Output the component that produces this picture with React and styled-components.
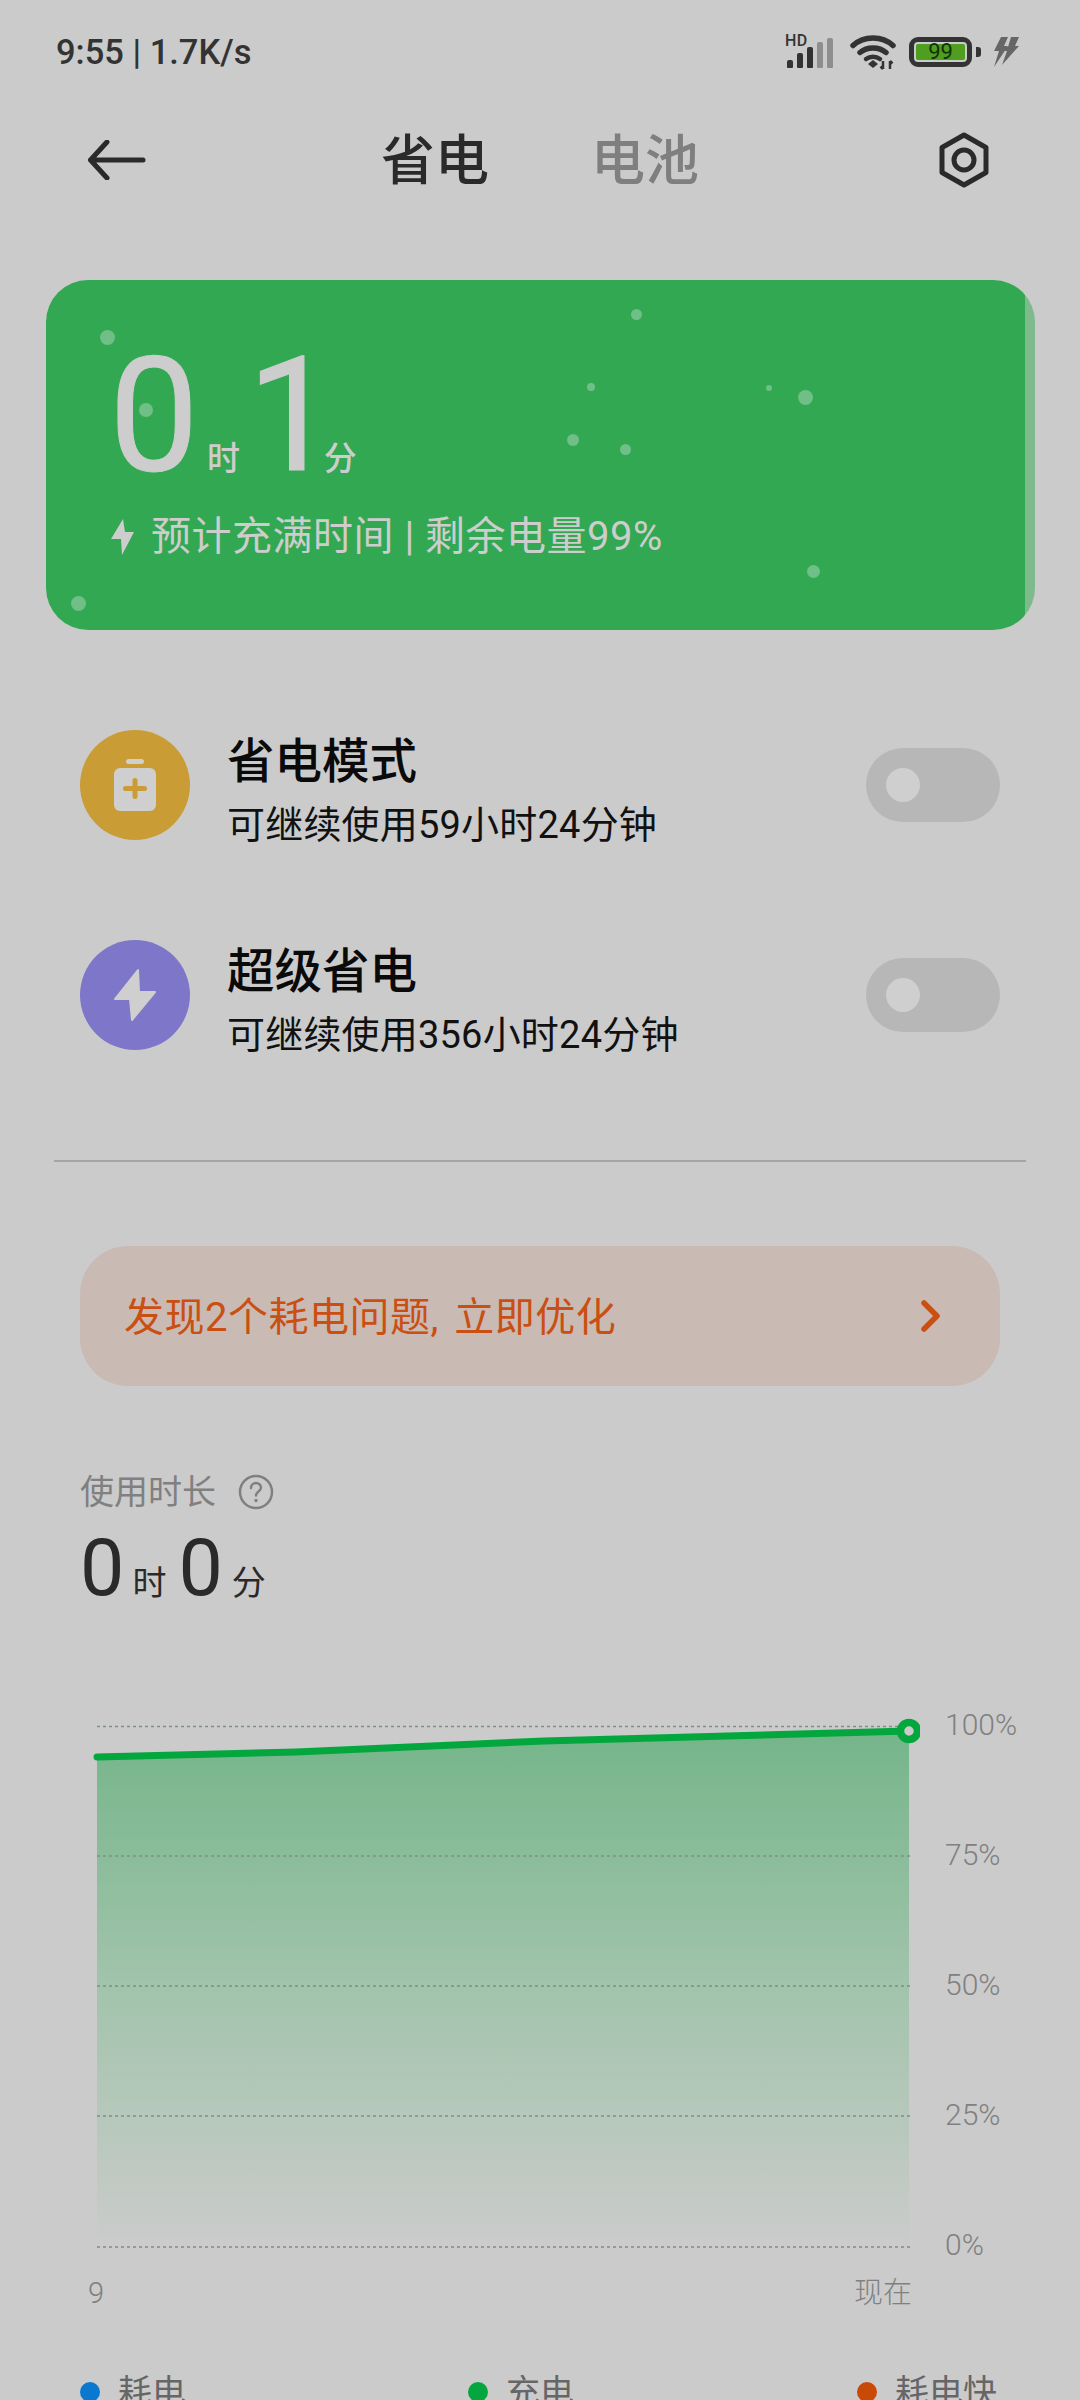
import React from 'react';
import styled, {createGlobalStyle} from 'styled-components';

const Global = createGlobalStyle`
  html, body {
    margin: 0;
    padding: 0;
    background: #cbcbcb;
    height: 2400px;
    overflow: hidden;
  }
  * { box-sizing: border-box; }
`;

const Page = styled.div`
  width: 1080px;
  height: 2400px;
  overflow: hidden;
  background: #cbcbcb;
  font-family: Roboto, "Noto Sans CJK SC", sans-serif;
  color: #2a2a2a;
`;

const StatusBar = styled.div`
  height: 104px;
  padding: 0 61px 0 56px;
  display: flex;
  align-items: center;
  justify-content: space-between;
`;
const Clock = styled.div`
  font-size: 34.500px;
  font-weight: 500;
  color: #333;
`;
const StatusIcons = styled.div`
  display: flex;
  align-items: center;
  gap: 13px;
`;
const Signal = styled.div`
  position: relative;
  width: 50px;
  height: 32px;
  display: flex;
  align-items: flex-end;
  gap: 4px;
`;
const Hd = styled.span`
  position: absolute;
  left: -2px;
  top: -2px;
  font-size: 16px;
  line-height: 14px;
  font-weight: 500;
  letter-spacing: 0.5px;
  color: #333;
`;
const SignalBar = styled.i`
  display: block;
  width: 6px;
  height: ${p => p.$h}px;
  background: ${p => (p.$off ? '#8e8e8e' : '#333')};
  border-radius: 2px 2px 1px 1px;
`;
const Battery = styled.div`
  position: relative;
  width: 63px;
  height: 30px;
  border: 5px solid #333;
  border-radius: 9px;
  padding: 2px;
  margin-right: 8px;
  &::after {
    content: '';
    position: absolute;
    right: -14px;
    top: 5px;
    width: 5px;
    height: 10px;
    background: #333;
    border-radius: 0 3px 3px 0;
  }
`;
const BatteryFill = styled.div`
  height: 100%;
  background: #4f9e1f;
  border-radius: 2px;
  display: flex;
  align-items: center;
  justify-content: center;
  font-size: 22px;
  line-height: 16px;
  color: #13300a;
`;

const Nav = styled.div`
  height: 112px;
  padding: 0 90px 0 88px;
  display: flex;
  align-items: center;
  justify-content: space-between;
`;
const Tabs = styled.div`
  display: flex;
  gap: 102px;
  padding-top: 4px;
  margin-right: 4px;
`;
const Tab = styled.div`
  font-size: 54px;
  line-height: 60px;
  font-weight: 500;
  color: ${p => (p.$active ? '#2a2a2a' : '#7f7f7f')};
`;

const Card = styled.div`
  position: relative;
  margin: 64px 0 0 46px;
  width: 989px;
  height: 350px;
  padding: 61px 0 0 63px;
  border-radius: 42px;
  overflow: hidden;
  background: linear-gradient(90deg, #33a853 0, #33a853 979px, #7fba8e 979px);
  color: #cdcdcd;
`;
const Bubble = styled.i`
  position: absolute;
  left: ${p => p.$x - 46}px;
  top: ${p => p.$y - 280}px;
  width: ${p => p.$d}px;
  height: ${p => p.$d}px;
  margin: ${p => -p.$d / 2}px 0 0 ${p => -p.$d / 2}px;
  border-radius: 50%;
  background: #6fbf86;
`;
const Duration = styled.div`
  display: flex;
  align-items: baseline;
  height: 150px;
`;
const BigNum = styled.span`
  font-size: 160px;
  line-height: 150px;
  font-weight: 400;
  -webkit-text-stroke: 1px #cdcdcd;
  letter-spacing: ${p => p.$ls || 0}px;
  margin-right: ${p => p.$mr || 0}px;
`;
const BigUnit = styled.span`
  font-size: 33px;
  font-weight: 500;
  margin-right: ${p => p.$mr || 0}px;
`;
const ChargeLine = styled.div`
  display: flex;
  align-items: center;
  gap: 17px;
  margin-top: 22px;
  font-size: 40px;
  line-height: 48px;
  letter-spacing: 0.5px;
  margin-left: 1px;
`;

const Modes = styled.div`
  margin-top: 50px;
`;
const ModeRow = styled.div`
  height: 210px;
  padding: 0 80px;
  display: flex;
  align-items: center;
`;
const ModeIcon = styled.div`
  width: 110px;
  height: 110px;
  border-radius: 50%;
  background: ${p => p.$bg};
  display: flex;
  align-items: center;
  justify-content: center;
`;
const ModeText = styled.div`
  flex: 1;
  margin-left: 37px;
  padding-top: 9px;
`;
const ModeTitle = styled.div`
  font-size: 47.500px;
  line-height: 60px;
  font-weight: 500;
  color: #0a0a0a;
`;
const ModeSub = styled.div`
  margin-top: 10px;
  font-size: 38px;
  line-height: 46px;
  letter-spacing: 0.2px;
  color: #111;
`;
const Toggle = styled.div`
  width: 134px;
  height: 74px;
  border-radius: 37px;
  background: #b7b7b7;
  padding: 20px;
`;
const Knob = styled.div`
  width: 34px;
  height: 34px;
  border-radius: 50%;
  background: #cfcfcf;
`;

const Divider = styled.div`
  margin: 60px 54px 0;
  height: 2px;
  background: #a5a5a5;
`;

const Banner = styled.div`
  margin: 84px 80px 0;
  height: 140px;
  padding: 0 58px 0 44px;
  border-radius: 48px;
  background: #c9bab3;
  display: flex;
  align-items: center;
  justify-content: space-between;
  font-size: 40px;
  color: #c94f12;
`;
const BannerText = styled.span`
  padding-bottom: 5px;
  letter-spacing: 0.5px;
  word-spacing: 5px;
`;

const Usage = styled.div`
  margin: 86px 0 0 80px;
`;
const UsageHead = styled.div`
  display: flex;
  align-items: center;
  gap: 22px;
  font-size: 34px;
  line-height: 40px;
  color: #808080;
`;
const UsageTime = styled.div`
  display: flex;
  align-items: baseline;
  margin-top: 14px;
  color: #2a2a2a;
`;
const UsageNum = styled.span`
  font-size: 79px;
  line-height: 84px;
  margin-right: ${p => p.$mr}px;
`;
const UsageUnit = styled.span`
  font-size: 34px;
  margin-right: ${p => p.$mr}px;
`;

const ChartWrap = styled.div`
  margin: 100px 0 0 90px;
  display: flex;
`;
const Plot = styled.svg`
  display: block;
  width: 830px;
  height: 550px;
`;
const YAxis = styled.div`
  margin: 0 0 0 25px;
  display: flex;
  flex-direction: column;
  gap: 100px;
  font-size: 30px;
  line-height: 30px;
  font-weight: 300;
  color: #808080;
`;
const XAxis = styled.div`
  width: 824px;
  margin: 15px 0 0 -2px;
  display: flex;
  justify-content: space-between;
  font-size: 29px;
  line-height: 36px;
  font-weight: 300;
  color: #808080;
`;
const Legend = styled.div`
  margin-top: 61px;
  padding-left: 80px;
  display: grid;
  grid-template-columns: 388px 389px auto;
`;
const LegendItem = styled.div`
  display: flex;
  align-items: center;
  gap: 18px;
  font-size: 34px;
  line-height: 40px;
  color: #666;
`;
const LegendDot = styled.i`
  width: 20px;
  height: 20px;
  border-radius: 50%;
  background: ${p => p.$c};
`;

const bubbles = [
  [107, 337, 15], [636, 314, 11], [146, 410, 14], [591, 387, 8], [769, 388, 6],
  [805, 397, 15], [573, 440, 12], [625, 449, 11], [813, 571, 13], [78, 603, 15],
];

const gridY = [16.5, 146, 276, 406, 537];

const Wifi = () => (
  <svg width="46" height="36" viewBox="0 0 46 36" fill="none">
    <path d="M3 11.500C14 1.500 32 1.500 43 11.500" stroke="#333" strokeWidth="5.500" strokeLinecap="round" />
    <path d="M10 18.500C17 12.500 29 12.500 36 18.500" stroke="#333" strokeWidth="5.500" strokeLinecap="round" />
    <path d="M16 25C20 22 26 22 30 25" stroke="#333" strokeWidth="4.500" strokeLinecap="round" />
    <path d="M18 30l5-4 5 4-5 4z" fill="#333" />
    <path d="M33 27v8M33 35l-2.500-2.500M40 35v-8M40 27l2.500 2.500" stroke="#333" strokeWidth="2.500" />
  </svg>
);

const DoubleBolt = () => (
  <svg width="26" height="30" viewBox="0 0 26 30">
    <path d="M8 0h7l-4 9h4L1 30l5-16H1z" fill="#666" />
    <path d="M18 0h8l-4 9h4L9 28l5-14h-4l3-4h2z" fill="#666" />
  </svg>
);

const BackArrow = () => (
  <svg width="58" height="40" viewBox="0 0 58 40" fill="none">
    <path d="M19 2L2.500 20 19 38M3 20h52" stroke="#2a2a2a" strokeWidth="5" strokeLinecap="round" strokeLinejoin="round" />
  </svg>
);

const HexNut = () => (
  <svg width="52" height="56" viewBox="0 0 52 56" fill="none">
    <path d="M26 3l22 12.500v25L26 53 4 40.500v-25z" stroke="#2a2a2a" strokeWidth="5" strokeLinejoin="round" />
    <circle cx="26" cy="28" r="10" stroke="#2a2a2a" strokeWidth="5" />
  </svg>
);

const SmallBolt = () => (
  <svg width="24" height="38" viewBox="0 0 24 38">
    <path d="M13 1L1 21h10l1 16L24 14h-9z" fill="#cdcdcd" />
  </svg>
);

const BatteryPlus = () => (
  <svg width="42" height="52" viewBox="0 0 42 52">
    <rect x="12" y="0" width="18" height="5" rx="2.500" fill="#cfcfcf" />
    <rect x="0" y="9" width="42" height="43" rx="6" fill="#cfcfcf" />
    <path d="M21 21.500v16M11.500 29.500h19" stroke="#c99c35" strokeWidth="5" strokeLinecap="round" />
  </svg>
);

const Bolt = () => (
  <svg width="44" height="54" viewBox="0 0 44 54">
    <path d="M25 2L2 31h15l2 21 23-28H26z" fill="#cfcfcf" stroke="#cfcfcf" strokeWidth="2" strokeLinejoin="round" />
  </svg>
);

const Chevron = () => (
  <svg width="22" height="32" viewBox="0 0 22 32" fill="none">
    <path d="M4 3l13 13L4 29" stroke="#c94f12" strokeWidth="5.500" strokeLinecap="round" strokeLinejoin="round" />
  </svg>
);

const Help = () => (
  <svg width="36" height="36" viewBox="0 0 36 36" fill="none">
    <circle cx="18" cy="18" r="16" stroke="#808080" strokeWidth="2.500" />
    <path d="M13 14c0-3 2.500-5 5-5s5 2 5 4.500c0 4-5 4-5 8" stroke="#808080" strokeWidth="2.500" strokeLinecap="round" />
    <circle cx="18" cy="26.500" r="1.700" fill="#808080" />
  </svg>
);

export default function App() {
  return (
    <Page>
      <Global />
      <StatusBar>
        <Clock>9:55 | 1.7K/s</Clock>
        <StatusIcons>
          <Signal>
            <Hd>HD</Hd>
            <SignalBar $h={8} />
            <SignalBar $h={15} />
            <SignalBar $h={21} />
            <SignalBar $h={26} $off />
            <SignalBar $h={30} $off />
          </Signal>
          <Wifi />
          <Battery>
            <BatteryFill>99</BatteryFill>
          </Battery>
          <DoubleBolt />
        </StatusIcons>
      </StatusBar>

      <Nav>
        <BackArrow />
        <Tabs>
          <Tab $active>省电</Tab>
          <Tab>电池</Tab>
        </Tabs>
        <HexNut />
      </Nav>

      <Card>
        {bubbles.map(([x, y, d]) => (
          <Bubble key={`${x}-${y}`} $x={x} $y={y} $d={d} />
        ))}
        <Duration>
          <BigNum $mr={8}>0</BigNum>
          <BigUnit $mr={7}>时</BigUnit>
          <BigNum $ls={-13}>1</BigNum>
          <BigUnit>分</BigUnit>
        </Duration>
        <ChargeLine>
          <SmallBolt />
          <span>预计充满时间 | 剩余电量99%</span>
        </ChargeLine>
      </Card>

      <Modes>
        <ModeRow>
          <ModeIcon $bg="#c99c35"><BatteryPlus /></ModeIcon>
          <ModeText>
            <ModeTitle>省电模式</ModeTitle>
            <ModeSub>可继续使用59小时24分钟</ModeSub>
          </ModeText>
          <Toggle><Knob /></Toggle>
        </ModeRow>
        <ModeRow>
          <ModeIcon $bg="#7e76c9"><Bolt /></ModeIcon>
          <ModeText>
            <ModeTitle>超级省电</ModeTitle>
            <ModeSub>可继续使用356小时24分钟</ModeSub>
          </ModeText>
          <Toggle><Knob /></Toggle>
        </ModeRow>
      </Modes>

      <Divider />

      <Banner>
        <BannerText>发现2个耗电问题, 立即优化</BannerText>
        <Chevron />
      </Banner>

      <Usage>
        <UsageHead>使用时长<Help /></UsageHead>
        <UsageTime>
          <UsageNum $mr={8}>0</UsageNum>
          <UsageUnit $mr={12}>时</UsageUnit>
          <UsageNum $mr={9}>0</UsageNum>
          <UsageUnit $mr={0}>分</UsageUnit>
        </UsageTime>
      </Usage>

      <ChartWrap>
        <div>
          <Plot viewBox="0 0 830 550">
            <defs>
              <linearGradient id="area" x1="0" y1="0" x2="0" y2="1">
                <stop offset="0" stopColor="#75b58a" />
                <stop offset="0.5" stopColor="#a2c4ac" />
                <stop offset="1" stopColor="#cbcbcb" />
              </linearGradient>
            </defs>
            <path d="M7 47L206 42 454 31 819 21V537H7z" fill="url(#area)" />
            {gridY.map(y => (
              <line key={y} x1="7" x2="822" y1={y} y2={y} stroke="#7f8f84" strokeWidth="1.500" strokeDasharray="3 3" />
            ))}
            <path d="M7 47L206 42 454 31 819 21" fill="none" stroke="#04a73e" strokeWidth="7" strokeLinecap="round" strokeLinejoin="round" />
            <circle cx="819" cy="21" r="8.500" fill="#cbcbcb" stroke="#04a73e" strokeWidth="7.500" />
          </Plot>
          <XAxis>
            <span>9</span>
            <span>现在</span>
          </XAxis>
        </div>
        <YAxis>
          <span>100%</span>
          <span>75%</span>
          <span>50%</span>
          <span>25%</span>
          <span>0%</span>
        </YAxis>
      </ChartWrap>

      <Legend>
        <LegendItem><LegendDot $c="#0b78d0" />耗电</LegendItem>
        <LegendItem><LegendDot $c="#04a73e" />充电</LegendItem>
        <LegendItem><LegendDot $c="#c94a06" />耗电快</LegendItem>
      </Legend>
    </Page>
  );
}
